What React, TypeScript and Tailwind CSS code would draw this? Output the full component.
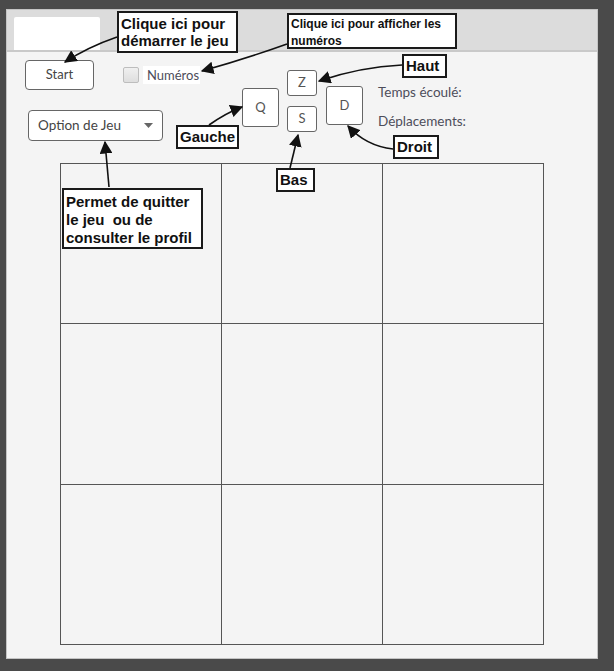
import React from "react"

const Callout = ({ className, children }: { className: string; children: React.ReactNode }) => (
    <div
        className={`absolute bg-white border-2 border-[#1a1a1a] text-[#111] font-bold leading-[17px] px-[2px] whitespace-pre ${className}`}
        style={{ fontFamily: '"Liberation Sans", Arial, sans-serif' }}
    >
        {children}
    </div>
)

const Key = ({ label, className }: { label: string; className: string }) => (
    <div className={`flex items-center justify-center bg-white border border-[#666] rounded-[3px] text-[13px] text-[#555] ${className}`}>
        {label}
    </div>
)

const App = () => {
    const cells = Array.from({ length: 9 })

    return (
        <div
            className="relative w-[614px] h-[671px] bg-[#4a4a4a] pt-[9px] pl-[6px] overflow-hidden"
            style={{ fontFamily: 'Lato, "Open Sans", sans-serif' }}
        >
            <div className="w-[592px] h-[650px] bg-[#f4f4f4] border border-[#c4c4c4] flex flex-col">
                {/* barre du haut */}
                <div className="h-[42px] bg-[#dcdcdc] border-b-2 border-[#c9c9c9] flex items-end pl-[7px]">
                    <div className="w-[86px] h-[33px] bg-white rounded-t-[2px]" />
                </div>

                {/* controles */}
                <div className="h-[111px] flex flex-row items-start">
                    <div className="w-[235px] flex flex-col">
                        <div className="flex flex-row items-center mt-[8px]">
                            <button className="ml-[18px] w-[69px] h-[30px] bg-white border border-[#666] rounded-[4px] text-[13px] text-[#444]">
                                Start
                            </button>
                            <div className="ml-[29px] w-[16px] h-[16px] rounded-[2px] border border-[#bdbdbd] bg-gradient-to-b from-[#f0f0f0] to-[#dedede]" />
                            <span className="ml-[4px] bg-white pl-[4px] pr-[1px] text-[13px] text-[#4d4d5a] leading-[18px]">
                                Numéros
                            </span>
                        </div>
                        <div className="ml-[21px] mt-[20px] w-[135px] h-[31px] bg-white border border-[#666] rounded-[4px] flex items-center justify-between pl-[9px] pr-[9px]">
                            <span className="text-[13.5px] text-[#444]">Option de Jeu</span>
                            <svg width="9" height="5" viewBox="0 0 9 5">
                                <path d="M0 0 L9 0 L4.5 5 Z" fill="#666" />
                            </svg>
                        </div>
                    </div>
                    <Key label="Q" className="mt-[36px] w-[37px] h-[39px]" />
                    <div className="ml-[8px] mt-[18px] flex flex-col gap-[10px]">
                        <Key label="Z" className="w-[30px] h-[26px]" />
                        <Key label="S" className="w-[30px] h-[26px]" />
                    </div>
                    <Key label="D" className="ml-[9px] mt-[34px] w-[37px] h-[39px]" />
                    <div className="ml-[15px] flex flex-col text-[13.5px] text-[#4d4d5a] leading-[18px]">
                        <span className="mt-[31px]">Temps écoulé:</span>
                        <span className="mt-[11px]">Déplacements:</span>
                    </div>
                </div>

                {/* plateau */}
                <div className="ml-[53px] w-[484px] h-[482px] grid grid-cols-3 grid-rows-3 border-t-[1.5px] border-l-[1.5px] border-[#555]">
                    {cells.map((_, i) => (
                        <div key={i} className="border-r-[1.5px] border-b-[1.5px] border-[#555]" />
                    ))}
                </div>
            </div>

            {/* annotations */}
            <Callout className="left-[117px] top-[11px] w-[121px] h-[42px] text-[15px] pt-[2px]">
                {"Clique ici pour\ndémarrer le jeu"}
            </Callout>
            <Callout className="left-[287px] top-[13px] w-[170px] h-[36px] text-[12px] leading-[15px] pt-[1px]">
                {"Clique ici pour afficher les\nnuméros"}
            </Callout>
            <Callout className="left-[402px] top-[54px] w-[45px] h-[24px] text-[15px] leading-[20px]">Haut</Callout>
            <Callout className="left-[176px] top-[125px] w-[63px] h-[24px] text-[15px] leading-[20px]">Gauche</Callout>
            <Callout className="left-[393px] top-[135px] w-[46px] h-[24px] text-[15px] leading-[20px]">Droit</Callout>
            <Callout className="left-[276px] top-[168px] w-[39px] h-[24px] text-[15px] leading-[20px]">Bas</Callout>
            <Callout className="left-[62px] top-[188px] w-[141px] h-[61px] text-[15px] leading-[18px] pt-[3px]">
                {"Permet de quitter\nle jeu  ou de\nconsulter le profil"}
            </Callout>

            <svg className="absolute inset-0 pointer-events-none" width="614" height="671">
                <defs>
                    <marker id="tete" viewBox="0 0 10 10" refX="9" refY="5" markerWidth="8" markerHeight="8" orient="auto">
                        <path d="M0 0 L10 5 L0 10 Z" fill="#111" />
                    </marker>
                </defs>
                <g stroke="#111" strokeWidth="1.6" fill="none" markerEnd="url(#tete)">
                    <path d="M117 37 Q 88 47 65 62" />
                    <path d="M287 44 Q 245 59 202 71" />
                    <path d="M402 65 Q 360 67 319 81" />
                    <path d="M393 149 Q 366 146 348 126" />
                    <path d="M290 168 L 298 135" />
                    <path d="M209 125 Q 226 113 242 107" />
                    <path d="M109 187 L 105 142" />
                </g>
            </svg>
        </div>
    )
}

export default App
